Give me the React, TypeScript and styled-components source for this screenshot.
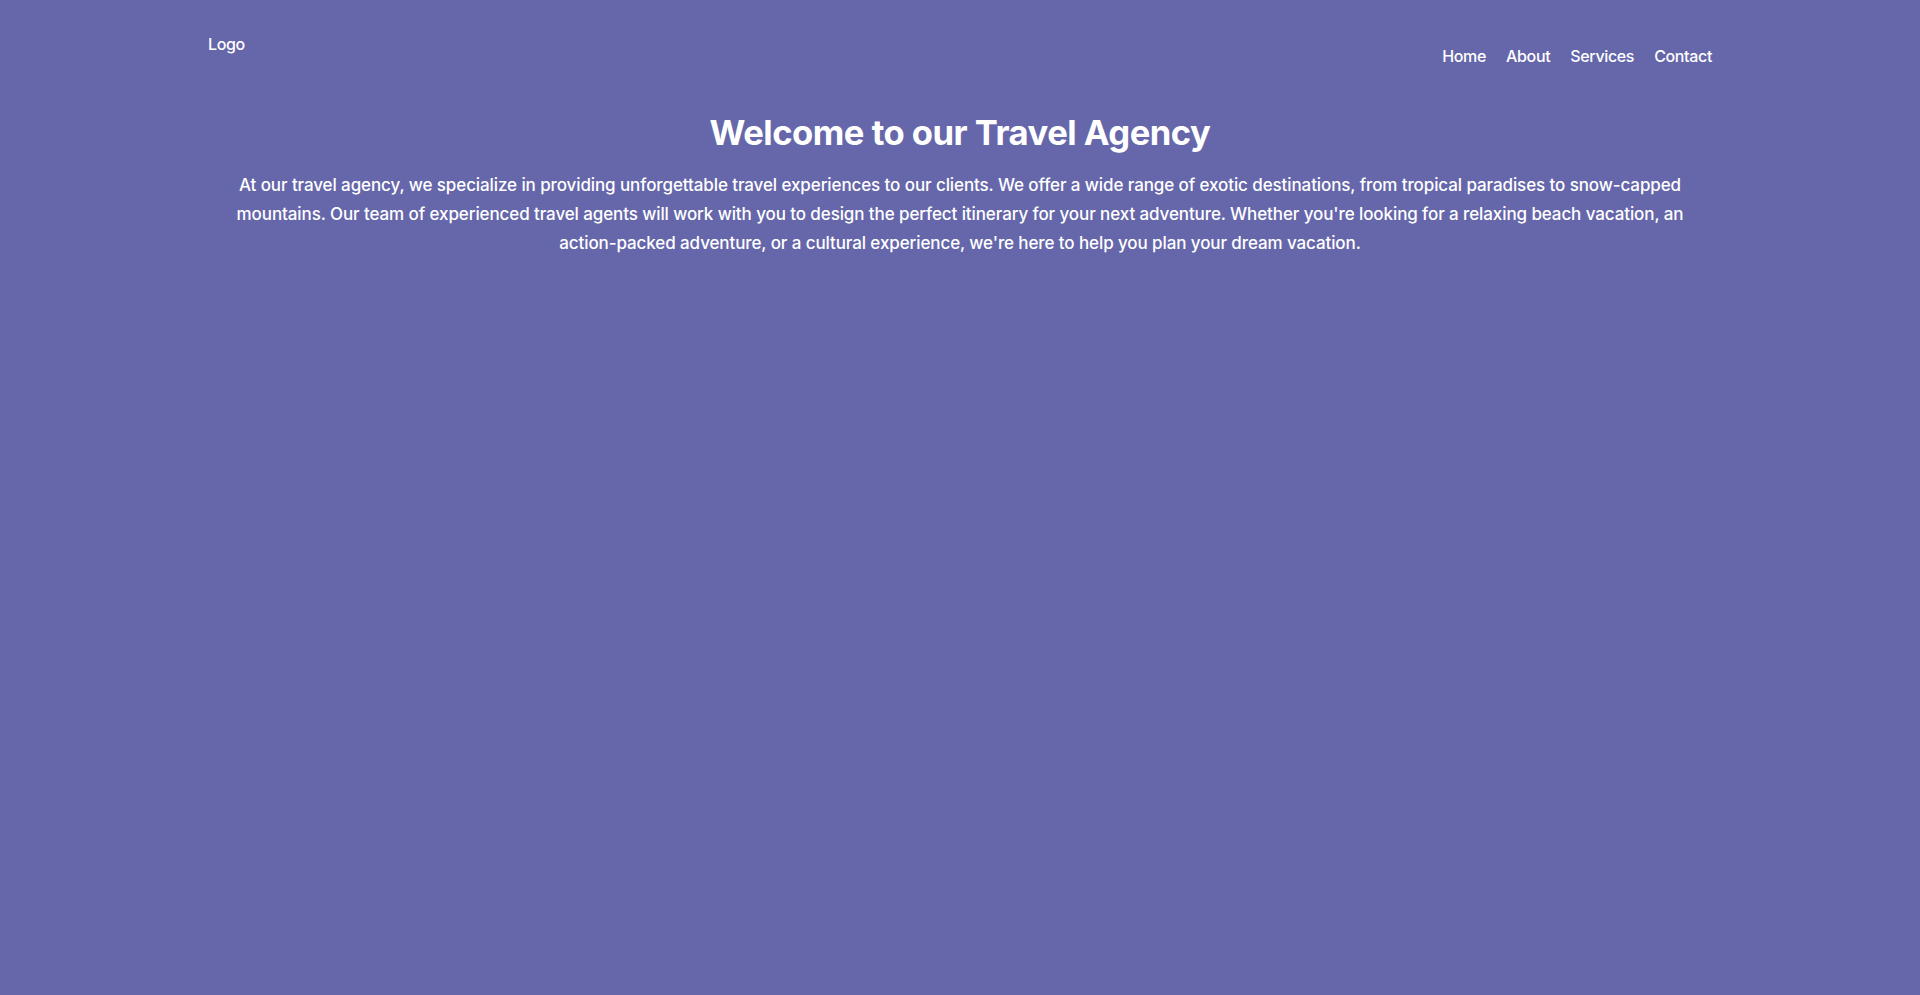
import styled, { createGlobalStyle } from 'styled-components';

const GlobalStyle = createGlobalStyle`
  html, body {
    margin: 0;
    padding: 0;
    background: #6667aa;
  }
  body {
    font-family: Inter, "Noto Sans", "Liberation Sans", sans-serif;
    color: #ffffff;
    min-height: 995px;
  }
`;

const Page = styled.div`
  min-height: 995px;
  background: #6667aa;
`;

const Container = styled.div`
  max-width: 1504px;
  margin: 0 auto;
`;

const Header = styled.header`
  display: flex;
  justify-content: space-between;
  align-items: flex-start;
  padding-top: 34px;
`;

const Logo = styled.div`
  font-size: 16px;
  font-weight: 500;
  letter-spacing: -0.35px;
`;

const Nav = styled.ul`
  display: flex;
  gap: 20px;
  list-style: none;
  margin: 12px 0 0;
  padding: 0;
`;

const NavItem = styled.li`
  font-size: 16px;
  font-weight: 500;
  letter-spacing: -0.35px;
`;

const Hero = styled.section`
  text-align: center;
  padding-top: 45px;
`;

const Title = styled.h1`
  font-size: 34.6px;
  font-weight: 700;
  letter-spacing: -0.5px;
  margin: 0 0 18px;
`;

const Text = styled.p`
  font-size: 17px;
  font-weight: 500;
  letter-spacing: -0.1px;
  line-height: 28.8px;
  margin: 0;
`;

const links = ['Home', 'About', 'Services', 'Contact'];

const App = () => {
  return (
    <Page>
      <GlobalStyle />
      <Container>
        <Header>
          <Logo>Logo</Logo>
          <Nav>
            {links.map((l) => (
              <NavItem key={l}>{l}</NavItem>
            ))}
          </Nav>
        </Header>
        <Hero>
          <Title>Welcome to our Travel Agency</Title>
          <Text>
            At our travel agency, we specialize in providing unforgettable travel experiences to our clients. We offer a wide range of exotic destinations, from tropical paradises to snow-capped mountains. Our team of experienced travel agents will work with you to design the perfect itinerary for your next adventure. Whether you're looking for a relaxing beach vacation, an action-packed adventure, or a cultural experience, we're here to help you plan your dream vacation.
          </Text>
        </Hero>
      </Container>
    </Page>
  );
};

export default App;
